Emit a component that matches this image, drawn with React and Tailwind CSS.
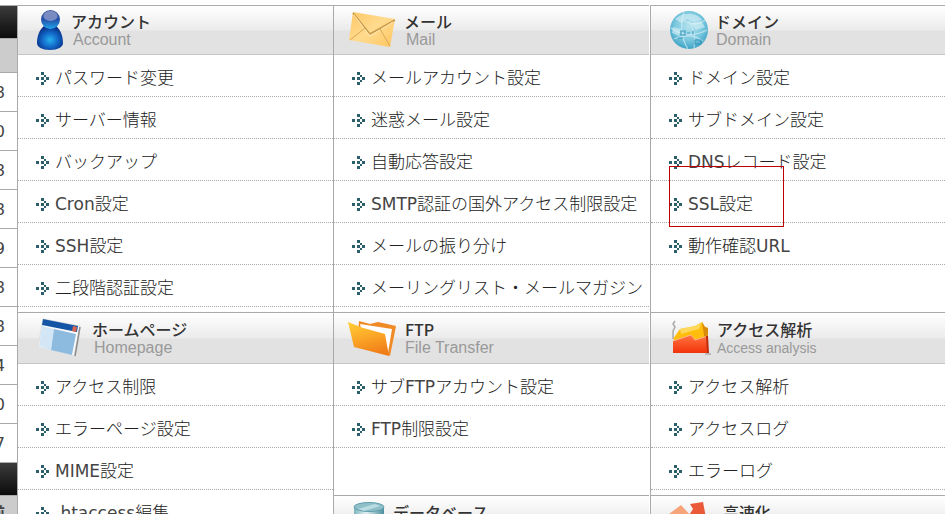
import React from 'react'

function AccountIcon() {
  return (
    <svg width="28" height="42" viewBox="0 0 28 42" aria-hidden="true">
      <defs>
        <radialGradient id="acBody" cx="0.5" cy="0.58" r="0.6">
          <stop offset="0" stopColor="#27b0f0" />
          <stop offset="0.5" stopColor="#1268c8" />
          <stop offset="1" stopColor="#06287c" />
        </radialGradient>
        <linearGradient id="acHead" x1="0" y1="0" x2="0" y2="1">
          <stop offset="0" stopColor="#3f5ba0" />
          <stop offset="0.5" stopColor="#2450a8" />
          <stop offset="1" stopColor="#20a4ee" />
        </linearGradient>
      </defs>
      <path d="M8 17C3 21 1 28 1 34c0 4 5 7 13 7s13-3 13-7c0-6-2-13-7-17-3 3-9 3-12 0z" fill="url(#acBody)" />
      <circle cx="14.5" cy="10.5" r="9.5" fill="url(#acHead)" />
      <ellipse cx="14.5" cy="7" rx="7" ry="5" fill="#9aa3cf" opacity="0.7" />
    </svg>
  )
}

function MailIcon() {
  return (
    <svg width="48" height="38" viewBox="0 0 48 38" aria-hidden="true">
      <defs>
        <linearGradient id="mlPaper" x1="0" y1="0" x2="1" y2="1">
          <stop offset="0" stopColor="#ffc766" />
          <stop offset="0.5" stopColor="#ffdb8e" />
          <stop offset="1" stopColor="#ffc45e" />
        </linearGradient>
      </defs>
      <path d="M5 1l42 7-5 28L1 29z" fill="url(#mlPaper)" />
      <path d="M5 2l17 21L47 9" fill="none" stroke="#c99a4b" strokeWidth="1.5" />
      <path d="M6 4l16 21L45 11" fill="none" stroke="#ffe8b5" strokeWidth="1" />
      <path d="M17 17L2 29M32 18l10 17" fill="none" stroke="#d9a956" strokeWidth="1" />
    </svg>
  )
}

function DomainIcon() {
  return (
    <svg width="40" height="40" viewBox="0 0 40 40" aria-hidden="true">
      <defs>
        <radialGradient id="dmGlobe" cx="0.5" cy="0.4" r="0.6">
          <stop offset="0" stopColor="#b4e2ee" />
          <stop offset="0.6" stopColor="#7cc9df" />
          <stop offset="1" stopColor="#3ea3c6" />
        </radialGradient>
      </defs>
      <circle cx="20" cy="20" r="19" fill="url(#dmGlobe)" />
      <path d="M6 9c8-7 21-7 27 1l-8 2-7-3-6 4zM22 13l10-2 4 6-9 3zM4 17l8 2-2 7-7-3z" fill="#d8f0f6" opacity="0.6" />
      <path d="M2 18c10 8 25 8 36 2M5 29c10-5 21-4 29 2M15 2c-4 12-3 26 4 37M20 11c5 8 7 17 5 27M15 11c8 4 15 4 21-1" fill="none" stroke="#e1f4f8" strokeWidth="1.2" opacity="0.6" />
      <path d="M12 21h4v4h-4zM18 23h3M24 21v3M26 30h6v4h-6zM9 28h5" fill="none" stroke="#2d8fb4" strokeWidth="1.2" opacity="0.8" />
    </svg>
  )
}

function HomepageIcon() {
  return (
    <svg width="44" height="40" viewBox="0 0 44 40" aria-hidden="true">
      <path d="M5 1l37 7-6 30-36-9z" fill="#fafafa" stroke="#dedede" />
      <path d="M42 9l-5 29" stroke="#8d8d8d" strokeWidth="1.5" />
      <path d="M5 1l35 7-1 6L4 7z" fill="#1455a6" />
      <path d="M35 8l4 1-1 5-4-1z" fill="#d9664c" />
      <path d="M4 8l12 3-3 21-12-4z" fill="#d3e6f5" />
      <path d="M16 11l22 5-4 21-21-5z" fill="#8dbbe0" />
    </svg>
  )
}

function FolderIcon() {
  return (
    <svg width="48" height="37" viewBox="0 0 48 37" aria-hidden="true">
      <defs>
        <linearGradient id="fdFront" x1="0.2" y1="0" x2="0.5" y2="1">
          <stop offset="0" stopColor="#ffcb35" />
          <stop offset="0.5" stopColor="#fba526" />
          <stop offset="1" stopColor="#ef7d18" />
        </linearGradient>
      </defs>
      <path d="M11 1l11 3 8-2 18 4-6 30L10 14z" fill="#f08a25" />
      <path d="M12 4l32 5-4 24-26-20z" fill="#fff" />
      <path d="M0 2l10 4 2 1 25 7 4 22L6 27z" fill="url(#fdFront)" />
    </svg>
  )
}

function AccessIcon() {
  return (
    <svg width="40" height="36" viewBox="0 0 40 36" aria-hidden="true">
      <defs>
        <linearGradient id="axRed" x1="0" y1="0" x2="0" y2="1">
          <stop offset="0" stopColor="#ff7440" />
          <stop offset="1" stopColor="#f2330c" />
        </linearGradient>
      </defs>
      <path d="M4 1l-2 3 2 3-2 4v8M34 34h6" fill="none" stroke="#aaa" strokeWidth="1.5" />
      <path d="M2 19L9 9l15-3 7-4 3 5 3 1v15l-18 5z" fill="#ffbe0b" />
      <path d="M31 2l3 5 3 1v12l-3 2z" fill="#d88c0a" />
      <path d="M9 9l15-3 7-4-3 7-18 5z" fill="#ffd75a" />
      <path d="M2 21l18-6 4 5 13-4v17L2 33z" fill="url(#axRed)" />
      <path d="M2 21l18-6 4 5 13-4" fill="none" stroke="#ffb08a" />
      <path d="M36 16l1 17" stroke="#bd2b0b" strokeWidth="2" />
    </svg>
  )
}

function DatabaseIcon() {
  return (
    <svg width="32" height="38" viewBox="0 0 32 38" aria-hidden="true">
      <defs>
        <linearGradient id="dbSide" x1="0" y1="0" x2="1" y2="0">
          <stop offset="0" stopColor="#7fb5c0" />
          <stop offset="0.4" stopColor="#e2f0f2" />
          <stop offset="1" stopColor="#4a8e9c" />
        </linearGradient>
      </defs>
      <path d="M1 5v27c0 6 30 6 30 0V5z" fill="url(#dbSide)" />
      <ellipse cx="16" cy="5" rx="15" ry="4.5" fill="#8fc0ca" stroke="#5f9eac" />
      <path d="M5 7l17-5 5 2-16 5z" fill="#b9dde2" />
    </svg>
  )
}

function SpeedIcon() {
  return (
    <svg width="38" height="38" viewBox="0 0 38 38" aria-hidden="true">
      <path d="M0 12L12 3l10 11-8 20z" fill="#f6a57a" />
      <path d="M21 2l13-2 3 16-4-3-14 22-8-8 13-20z" fill="#ea5a38" />
    </svg>
  )
}

const columns = [
  {
    className: '',
    sections: [
      {
        title: 'アカウント', sub: 'Account', icon: <AccountIcon />,
        headClass: 'h-[50px] pl-[18px] gap-[7px]', subClass: 'pl-[2px] text-base',
        items: ['パスワード変更', 'サーバー情報', 'バックアップ', 'Cron設定', 'SSH設定', '二段階認証設定']
      },
      {
        title: 'ホームページ', sub: 'Homepage', icon: <HomepageIcon />,
        headClass: 'h-[52px] pl-[20px] gap-[10px]', subClass: 'pl-[2px] text-base',
        items: ['アクセス制限', 'エラーページ設定', 'MIME設定', '.htaccess編集']
      }
    ]
  },
  {
    className: 'border-l border-[#aaa] pr-px',
    sections: [
      {
        title: 'メール', sub: 'Mail', icon: <MailIcon />,
        headClass: 'h-[50px] pl-[14px] gap-2', subClass: 'pl-[2px] text-base',
        items: ['メールアカウント設定', '迷惑メール設定', '自動応答設定', 'SMTP認証の国外アクセス制限設定', 'メールの振り分け', 'メーリングリスト・メールマガジン']
      },
      {
        title: 'FTP', sub: 'File Transfer', icon: <FolderIcon />,
        headClass: 'h-[52px] pl-[14px] gap-[9px]', subClass: 'text-base',
        items: ['サブFTPアカウント設定', 'FTP制限設定']
      },
      {
        title: 'データベース', sub: 'Database', icon: <DatabaseIcon />,
        headClass: 'h-[52px] pl-[19px] gap-2', subClass: 'text-base',
        items: []
      }
    ]
  },
  {
    className: 'border-l border-[#aaa]',
    sections: [
      {
        title: 'ドメイン', sub: 'Domain', icon: <DomainIcon />,
        headClass: 'h-[50px] pl-[18px] gap-[6px]', subClass: 'pl-px text-base',
        items: ['ドメイン設定', 'サブドメイン設定', 'DNSレコード設定', 'SSL設定', '動作確認URL']
      },
      {
        title: 'アクセス解析', sub: 'Access analysis', icon: <AccessIcon />,
        headClass: 'h-[52px] pl-[20px] gap-[6px]', subClass: 'text-sm',
        items: ['アクセス解析', 'アクセスログ', 'エラーログ']
      },
      {
        title: '高速化', sub: 'Speed up', icon: <SpeedIcon />,
        headClass: 'h-[52px] pl-[18px] gap-4', subClass: 'text-base',
        items: []
      }
    ]
  }
]

const usage = ['8', '0', '8', '8', '9', '8', '8', '4', '0', '7']

function Arrow() {
  return (
    <svg width="13" height="13" viewBox="0 0 13 13" fill="#2b5f69" className="shrink-0" shapeRendering="crispEdges" aria-hidden="true">
      <rect x="0" y="5" width="3" height="3" />
      <rect x="5" y="0" width="3" height="3" />
      <rect x="5" y="5" width="3" height="3" />
      <rect x="5" y="10" width="3" height="3" />
      <rect x="8" y="3" width="2" height="2" />
      <rect x="8" y="8" width="2" height="2" />
      <rect x="10" y="5" width="3" height="3" />
    </svg>
  )
}

// Latin parts keep the regular weight, Japanese parts are light
function Label({ text }) {
  return (
    <span className="pt-[2px] font-light">
      {text.split(/([A-Za-z.]+)/).filter(Boolean).map((part, idx) => (
        <span key={idx} className={/[A-Za-z]/.test(part) ? 'font-normal text-[#444]' : ''}>{part}</span>
      ))}
    </span>
  )
}

function Section({ section, minHeight }) {
  return (
    <section className={minHeight}>
      <header className={`flex items-center overflow-hidden border-t border-b border-t-[#aaa] border-b-[#c6c6c6] bg-[linear-gradient(#fff_0%,#ebebeb_50%,#e2e2e2_52%,#e2e2e2_100%)] ${section.headClass}`}>
        <span className="shrink-0">{section.icon}</span>
        <div className="whitespace-nowrap pt-px">
          <h2 className="font-['Noto_Sans_CJK_JP',sans-serif] text-base leading-[18px] font-medium text-[#333]">{section.title}</h2>
          <p className={`font-['Liberation_Sans',sans-serif] text-[#999] ${section.subClass}`}>
            <span className="block leading-5">{section.sub}</span>
          </p>
        </div>
      </header>
      <ul>
        {section.items.map(item => (
          <li key={item} className="relative h-[42px] border-b border-dotted border-[#aaa]">
            <a href="#" className="flex h-full items-center gap-[6px] whitespace-nowrap pt-[5px] pl-[18px] text-[17px] text-[#222]">
              <Arrow />
              <Label text={item} />
            </a>
            {/* Highlight frame */}
            {item === 'SSL設定' && (
              <div className="pointer-events-none absolute -top-[15px] left-[18px] h-[61px] w-[115px] border border-[#c00000]"></div>
            )}
          </li>
        ))}
      </ul>
    </section>
  )
}

const rowHeights = ['min-h-[307px]', 'min-h-[183px]', '']

function App() {
  return (
    <div className="flex h-screen overflow-hidden bg-white pt-[5px] font-['DejaVu_Sans','Noto_Sans_CJK_JP',sans-serif]">
      {/* Usage column */}
      <aside className="w-[18px] shrink-0 overflow-hidden border-r border-[#aaa] text-base text-[#444]">
        <div className="h-[33px] border-t border-[#aaa] bg-linear-to-b from-[#3c3c3c] to-[#0c0c0c]"></div>
        <div className="h-[34px] border-t border-[#aaa] bg-[#ccc]"></div>
        {usage.map((value, idx) => (
          <div key={idx} className="flex h-[39px] items-center justify-end border-t border-[#aaa] pt-[2px] pr-3">{value}</div>
        ))}
        <div className="h-[33px] border-t border-[#aaa] bg-linear-to-b from-[#3c3c3c] to-[#0c0c0c]"></div>
        <div className="flex h-[34px] items-center justify-end border-t border-[#aaa] bg-[#ccc] pt-[2px] pr-3 font-bold">前</div>
      </aside>

      {/* Menu columns */}
      <main className="grid flex-1 grid-cols-[315fr_317fr_295fr]">
        {columns.map((column, idx) => (
          <div key={idx} className={`min-w-0 ${column.className}`}>
            {column.sections.map((section, i) => (
              <Section key={section.title} section={section} minHeight={rowHeights[i]} />
            ))}
          </div>
        ))}
      </main>
    </div>
  )
}

export default App
